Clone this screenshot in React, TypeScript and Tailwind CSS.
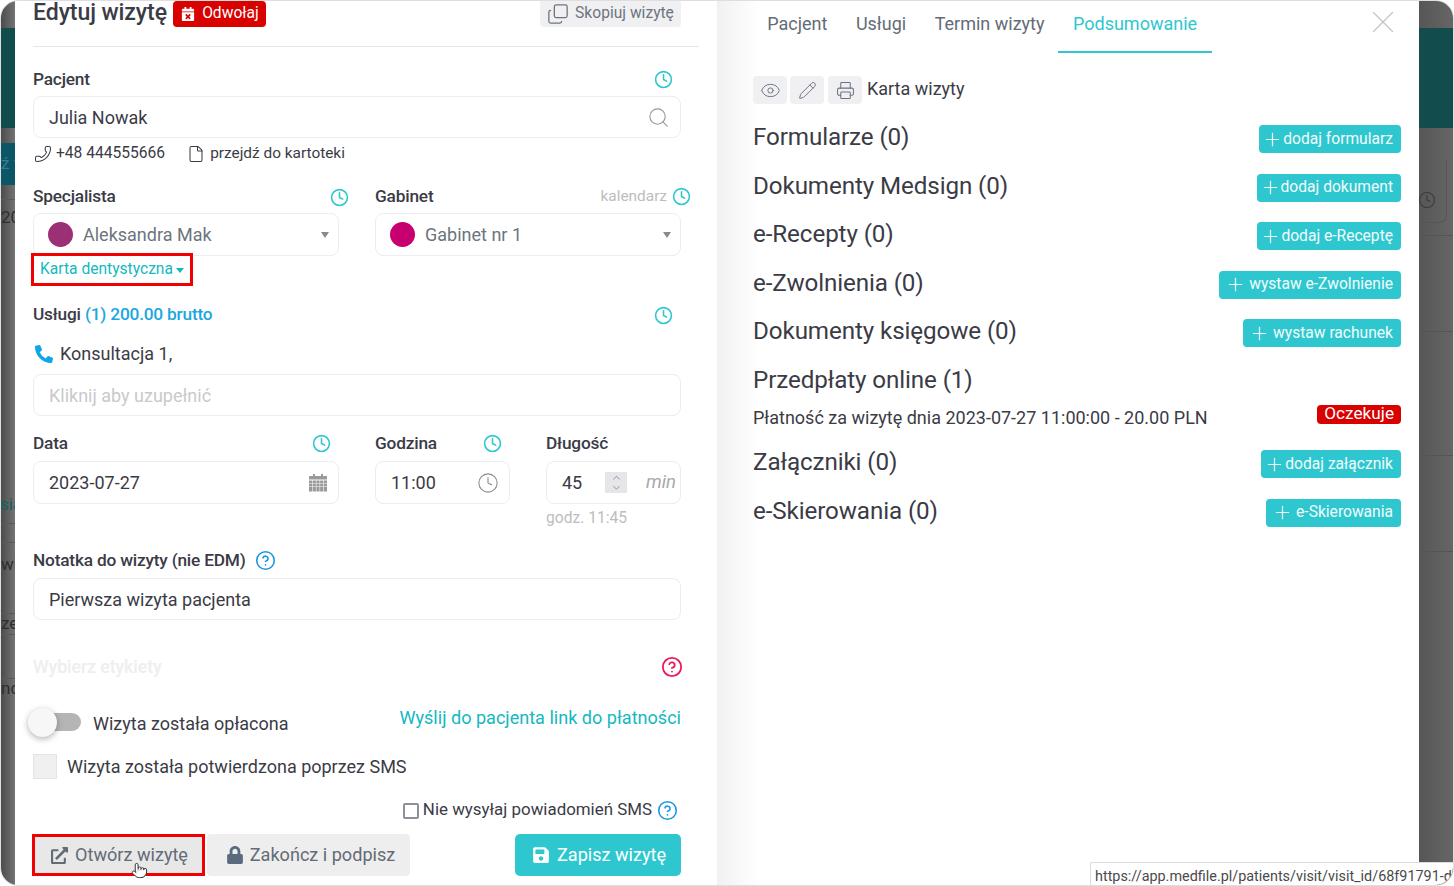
import { Clock, CircleHelp, Copy, Eye, File, Pencil, Phone, Plus, Pointer, Printer, Search, X, ChevronUp, ChevronDown } from 'lucide-react';
import { FaCalendarTimes, FaExternalLinkAlt, FaLock, FaPhoneAlt, FaSave } from 'react-icons/fa';

function TealClock({ className = '' }: { className?: string }) {
  return <Clock size={19} strokeWidth={2} className={`text-[#2ec7cf] ${className}`} />;
}

function Label({ children }: { children: React.ReactNode }) {
  return <span className="text-[17.3px] font-medium text-[#3b3b46] tracking-[-0.2px]">{children}</span>;
}

function Field({ children, className = '' }: { children: React.ReactNode; className?: string }) {
  return (
    <div className={`flex items-center rounded-[8px] border border-[#ecedf2] bg-white pl-[15px] pr-[10px] text-[18px] ${className}`}>
      {children}
    </div>
  );
}

function Select({ color, text }: { color: string; text: string }) {
  return (
    <Field className="h-[43px]">
      <span className="w-[25px] h-[25px] rounded-full shrink-0 -ml-[1px]" style={{ background: color }} />
      <span className="ml-[10px] text-[#6c757d] flex-1">{text}</span>
      <span className="w-0 h-0 border-x-[4.5px] border-x-transparent border-t-[6px] border-t-[#8a8a8a] mr-[-1px]" />
    </Field>
  );
}

function Section({ title, action, wide }: { title: string; action?: string; wide?: boolean }) {
  return (
    <div className="h-[48.5px] flex items-center justify-between">
      <span className="text-[24.2px] text-[#3b3b46] tracking-[-0.1px]">{title}</span>
      {action && (
        <span className="h-[28px] mt-[4px] flex items-center rounded-[4px] bg-[#2ec7cf] pl-[7px] pr-[8px] text-[15.6px] text-[#f2fcfc]">
          <Plus size={21} strokeWidth={1.4} className={wide ? '-ml-[1px] mr-[3.5px]' : '-ml-[4px]'} />
          {action}
        </span>
      )}
    </div>
  );
}

function Tool({ children }: { children: React.ReactNode }) {
  return <span className="w-[34px] h-[28px] rounded-[4px] bg-[#f0f0f2] flex items-center justify-center text-[#6b7280]">{children}</span>;
}

function Tab({ children, active }: { children: React.ReactNode; active?: boolean }) {
  return (
    <span className={`h-[52px] pb-[5px] flex items-center px-[14.75px] -mx-[0.5px] border-b-2 ${active ? 'border-[#2ec7cf] text-[#2ec7cf]' : 'border-transparent text-[#636b76]'}`}>
      {children}
    </span>
  );
}

// grid calendar of the date field
function GridCalendar() {
  return (
    <svg width="18" height="18" viewBox="0 0 18 18" className="text-[#9a9a9a] mr-[1px]" fill="currentColor">
      <rect x="4" y="0" width="2" height="3" />
      <rect x="12" y="0" width="2" height="3" />
      <rect x="0" y="2" width="18" height="3.5" rx="0.5" />
      {[6.5, 9.5, 12.5, 15].map((y) =>
        [0, 3.7, 7.4, 11.1, 14.8].map((x) => <rect key={`${x}-${y}`} x={x} y={y} width="3.2" height="2.5" />)
      )}
    </svg>
  );
}

// lines and clipped words of the dimmed page behind the modal
function BackdropLeft() {
  return (
    <div className="w-[14px] shrink-0 flex flex-col overflow-hidden bg-gradient-to-r from-[#4c4c4c] to-[#747474] text-[17px] text-[#2e2e2e]">
      <div className="h-[27px]" />
      <div className="h-[100px] bg-[#124c4c]" />
      <div className="h-[15px]" />
      <div className="h-[42px] bg-[#0b5566] text-[#2f7f92] flex items-center whitespace-nowrap">ź t</div>
      <div className="h-[15px] border-b border-[#5a5a5a]" />
      <div className="h-[36px] flex items-center whitespace-nowrap">20</div>
      <div className="h-[251px]" />
      <div className="h-[37px] text-[#155f5f] flex items-center whitespace-nowrap border-b border-[#5a5a5a] -ml-[1px]">sia</div>
      <div className="h-[19px] border-b border-[#5a5a5a]" />
      <div className="h-[44px] flex items-center whitespace-nowrap">wi</div>
      <div className="h-[27px] border-b border-[#5a5a5a]" />
      <div className="h-[21px] flex items-center whitespace-nowrap border-b border-[#5a5a5a]">ze</div>
      <div className="h-[44px] border-b border-[#5a5a5a]" />
      <div className="h-[20px] flex items-center whitespace-nowrap">nc</div>
    </div>
  );
}

function BackdropRight() {
  return (
    <div className="flex-1 flex flex-col overflow-hidden bg-gradient-to-r from-[#565656] to-[#666666]">
      <div className="h-[27px]" />
      <div className="h-[100px] bg-[#124c4c]" />
      <div className="h-[95px] flex items-end">
        <div className="w-[31px] h-[63px] rounded-br-[8px] border-r border-b border-[#555] flex items-end justify-end pr-[10px] pb-[13px] -ml-[3px]">
          <Clock size={18} strokeWidth={1.5} className="text-[#3a3a3a]" />
        </div>
      </div>
      <div className="h-[13px] border-b border-[#555]" />
      <div className="h-[96px] border-b border-[#555]" />
      <div className="h-[124px] border-b border-[#555]" />
      <div className="h-[96px] border-b border-[#555]" />
    </div>
  );
}

export default function App() {
  return (
    <div className="w-[1454px] h-[886px] bg-white overflow-hidden font-['Roboto',sans-serif]">
      <div className="relative w-full h-full flex overflow-hidden rounded-[18px] border border-[#dedede]">
        <BackdropLeft />

        {/* Left: form */}
        <div className="w-[702px] shrink-0 bg-white flex flex-col pl-[18px] pr-[36px]">
          <div className="h-[46px] -mr-[18px] pr-[18px] border-b border-[#e6e6ea] flex items-start justify-between">
            <div className="flex items-start">
              <span className="text-[23.1px] font-medium text-[#3b3b46] leading-[24px] tracking-[-0.1px]">Edytuj wizytę</span>
              <span className="ml-[6px] h-[26px] w-[93px] pl-[1px] rounded-[4px] bg-[#d90000] text-white text-[15.6px] flex items-center justify-center gap-[7px]">
                <FaCalendarTimes size={14} />
                Odwołaj
              </span>
            </div>
            <span className="h-[27px] -mt-[1px] w-[141px] rounded-[4px] bg-[#f0f0f2] text-[#6c757d] text-[15.6px] flex items-center justify-center gap-[6px]">
              <Copy size={22} strokeWidth={1.4} className="-scale-y-100" />
              Skopiuj wizytę
            </span>
          </div>

          <div className="h-[49px] pt-[16px] flex items-center justify-between pr-[8px]">
            <Label>Pacjent</Label>
            <TealClock />
          </div>
          <Field className="h-[42px] justify-between text-[#3b3b46]">
            Julia Nowak
            <Search size={23} strokeWidth={1.2} className="text-[#9a9a9a]" />
          </Field>
          <div className="h-[28px] pt-[4px] flex items-center text-[15.6px] text-[#3b3b46]">
            <Phone size={18} strokeWidth={1.4} className="-scale-x-100 ml-[1px] mr-[4px]" />
            +48 444555666
            <File size={18} strokeWidth={1.4} className="ml-[22px] mr-[5px]" />
            <span className="text-[15.4px]">przejdź do kartoteki</span>
          </div>

          <div className="h-[47px] pt-[15px] flex items-center">
            <div className="w-[306px] flex items-center justify-between">
              <Label>Specjalista</Label>
              <TealClock className="-mr-[10px]" />
            </div>
            <div className="ml-[36px] flex-1 flex items-center justify-between">
              <Label>Gabinet</Label>
              <span className="flex items-center text-[15.4px] text-[#bdbdbd] -mr-[10px]">
                kalendarz
                <TealClock className="ml-[5px]" />
              </span>
            </div>
          </div>
          <div className="flex gap-[36px] -mb-[1px]">
            <div className="w-[306px]"><Select color="#9c3074" text="Aleksandra Mak" /></div>
            <div className="w-[306px]"><Select color="#c7006f" text="Gabinet nr 1" /></div>
          </div>
          <div className="-ml-[2px] -mt-[2px] w-[162px] h-[33px] pt-[1px] border-[3px] border-[#f00000] flex items-center pl-[6px] text-[15.6px] text-[#14b8bf]">
            Karta dentystyczna
            <span className="ml-[3px] w-0 h-0 border-x-[4.5px] border-x-transparent border-t-[5px] border-t-[#14b8bf]" />
          </div>

          <div className="h-[45px] pt-[13px] flex items-center justify-between pr-[8px]">
            <span className="text-[17.3px] font-medium text-[#3b3b46] tracking-[-0.2px]">
              Usługi <span className="text-[#1aa7e0]">(1) 200.00 brutto</span>
            </span>
            <TealClock />
          </div>
          <div className="h-[40px] pt-[5px] flex items-center text-[18px] text-[#3b3b46]">
            <FaPhoneAlt size={18} className="text-[#0ea5e9] -scale-x-100 rotate-90 ml-[2px] mr-[7px]" />
            Konsultacja 1,
          </div>
          <Field className="h-[42px] mt-[3px] text-[#c9c9cc]">Kliknij aby uzupełnić</Field>

          <div className="flex gap-[36px] mt-[14px]">
            <div className="w-[306px]">
              <div className="h-[31px] pb-[4px] flex items-center justify-between pr-[8px]">
                <Label>Data</Label>
                <TealClock />
              </div>
              <Field className="justify-between h-[43px] text-[#3b3b46]">
                2023-07-27
                <GridCalendar />
              </Field>
            </div>
            <div className="w-[135px]">
              <div className="h-[31px] pb-[4px] flex items-center justify-between pr-[8px]">
                <Label>Godzina</Label>
                <TealClock />
              </div>
              <Field className="justify-between h-[43px] text-[#3b3b46]">
                11:00
                <Clock size={22} strokeWidth={1.2} className="text-[#8d8d8d]" />
              </Field>
            </div>
            <div className="w-[135px]">
              <div className="h-[31px] pb-[4px] flex items-center">
                <Label>Długość</Label>
              </div>
              <Field className="h-[43px] text-[#3b3b46]">
                45
                <span className="ml-[23px] w-[22px] h-[21px] bg-[#e6e6ea] flex flex-col items-center justify-center text-[#777777]">
                  <ChevronUp size={13} strokeWidth={1.5} className="-mb-[1px]" />
                  <ChevronDown size={13} strokeWidth={1.5} className="-mt-[1px]" />
                </span>
                <span className="ml-auto -mr-[6px] text-[18.5px] italic text-[#a8a8ad]">min</span>
              </Field>
              <div className="mt-[5px] text-[15.6px] text-[#bdbdbd] leading-[18px]">godz. 11:45</div>
            </div>
          </div>

          <div className="mt-[18px] h-[31px] flex items-center">
            <Label>Notatka do wizyty (nie EDM)</Label>
            <CircleHelp size={21} strokeWidth={1.8} className="ml-[9px] text-[#1a96e0]" />
          </div>
          <Field className="h-[42px] mt-[2px] text-[#3b3b46]">Pierwsza wizyta pacjenta</Field>

          <div className="h-[94px] flex items-center justify-between">
            <span className="text-[17.8px] font-medium text-[#eeeeef] tracking-[-0.1px]">Wybierz etykiety</span>
            <CircleHelp size={22} strokeWidth={2} className="text-[#f01a5a] -mr-[2px]" />
          </div>

          <div className="-mt-[11px] h-[38px] flex items-center justify-between">
            <div className="flex items-center">
              <span className="relative w-[48px] h-[18px] rounded-full bg-[#b5b5b5]">
                <span className="absolute -left-[5px] -top-[5px] w-[29px] h-[29px] rounded-full bg-[#f7f7f7] shadow-[0_2px_6px_rgba(0,0,0,0.3)]" />
              </span>
              <span className="ml-[12px] mt-[3px] text-[18px] text-[#3b3b46]">Wizyta została opłacona</span>
            </div>
            <span className="-mt-[9px] text-[18.07px] text-[#14b8bf]">Wyślij do pacjenta link do płatności</span>
          </div>
          <div className="h-[25px] mt-[13px] flex items-center text-[18px] text-[#3b3b46]">
            <span className="w-[24px] h-[25px] bg-[#f0f0f0] border border-[#e4e4e4] mr-[10px]" />
            Wizyta została potwierdzona poprzez SMS
          </div>
          <div className="mt-[19px] h-[24px] flex items-center justify-end text-[16.9px] text-[#3b3b46] pr-[3px]">
            <span className="w-[16px] h-[16px] rounded-[2px] border-2 border-[#8f8f99] mr-[4px] mt-[2px]" />
            Nie wysyłaj powiadomień SMS
            <CircleHelp size={21} strokeWidth={1.8} className="ml-[5px] text-[#1a96e0]" />
          </div>
          <div className="mt-[12px] flex items-center">
            <span className="relative -ml-[1px] w-[173px] h-[42px] border-[3px] border-[#f00000] bg-[#e8e8e8] text-[#636b76] text-[18.1px] flex items-center justify-center gap-[7px] pl-[2px]">
              <FaExternalLinkAlt size={17} />
              Otwórz wizytę
              <Pointer size={17} strokeWidth={1.4} fill="#ffffff" className="absolute left-[96px] top-[25px] text-[#333]" />
            </span>
            <span className="ml-[2px] w-[203px] h-[42px] rounded-[4px] bg-[#eeeeee] text-[#636b76] text-[18.1px] flex items-center justify-center gap-[6px] pl-[4px]">
              <FaLock size={18} className="text-[#5a6b7f]" />
              Zakończ i podpisz
            </span>
            <span className="ml-auto w-[166px] h-[42px] rounded-[5px] bg-[#2ec7cf] text-white text-[18.1px] flex items-center justify-center gap-[7px] pl-[2px]">
              <FaSave size={18} />
              Zapisz wizytę
            </span>
          </div>
        </div>

        {/* Right: summary */}
        <div className="w-[702px] shrink-0 bg-gradient-to-r from-[#f1f1f1] from-0% to-white to-[6%] flex flex-col pl-[36px] pr-[18px]">
          <div className="flex items-start justify-between text-[18px]">
            <div className="flex">
              <Tab>Pacjent</Tab>
              <Tab>Usługi</Tab>
              <Tab>Termin wizyty</Tab>
              <Tab active>Podsumowanie</Tab>
            </div>
            <X size={38} strokeWidth={0.8} className="text-[#c4c4c4] mt-[2px] -mr-[1px]" />
          </div>

          <div className="mt-[23px] h-[28px] flex items-center gap-[3px]">
            <Tool><Eye size={21} strokeWidth={1.1} /></Tool>
            <Tool><Pencil size={19} strokeWidth={1.2} /></Tool>
            <span className="ml-[1px]"><Tool><Printer size={19} strokeWidth={1.3} /></Tool></span>
            <span className="ml-[2px] -mt-[4px] text-[18px] text-[#3b3b46]">Karta wizyty</span>
          </div>

          <div className="mt-[9px] flex flex-col">
            <Section title="Formularze (0)" action="dodaj formularz" />
            <Section title="Dokumenty Medsign (0)" action="dodaj dokument" />
            <Section title="e-Recepty (0)" action="dodaj e-Receptę" />
            <Section title="e-Zwolnienia (0)" action="wystaw e-Zwolnienie" wide />
            <Section title="Dokumenty księgowe (0)" action="wystaw rachunek" wide />
            <Section title="Przedpłaty online (1)" />
            <div className="h-[26px] flex items-center justify-between text-[18px] text-[#3b3b46]">
              <span>Płatność za wizytę dnia 2023-07-27 11:00:00 - 20.00 PLN</span>
              <span className="-mt-[6px] h-[19px] rounded-[4px] bg-[#d90000] px-[7px] text-[17.2px] text-white flex items-center">Oczekuje</span>
            </div>
            <div className="h-[8px]" />
            <Section title="Załączniki (0)" action="dodaj załącznik" />
            <Section title="e-Skierowania (0)" action="e-Skierowania" wide />
          </div>
        </div>

        <BackdropRight />

        {/* Browser status bubble */}
        <div className="absolute right-0 bottom-0 w-[363px] h-[23px] overflow-hidden rounded-br-[18px] rounded-tl-[2px] border-t border-l border-[#dcdcdc] bg-white pl-[4px] pt-[4px] text-[14.4px] leading-[20px] text-[#4a4a4a] whitespace-nowrap">
          https://app.medfile.pl/patients/visit/visit_id/68f91791-d0
        </div>
      </div>
    </div>
  );
}
